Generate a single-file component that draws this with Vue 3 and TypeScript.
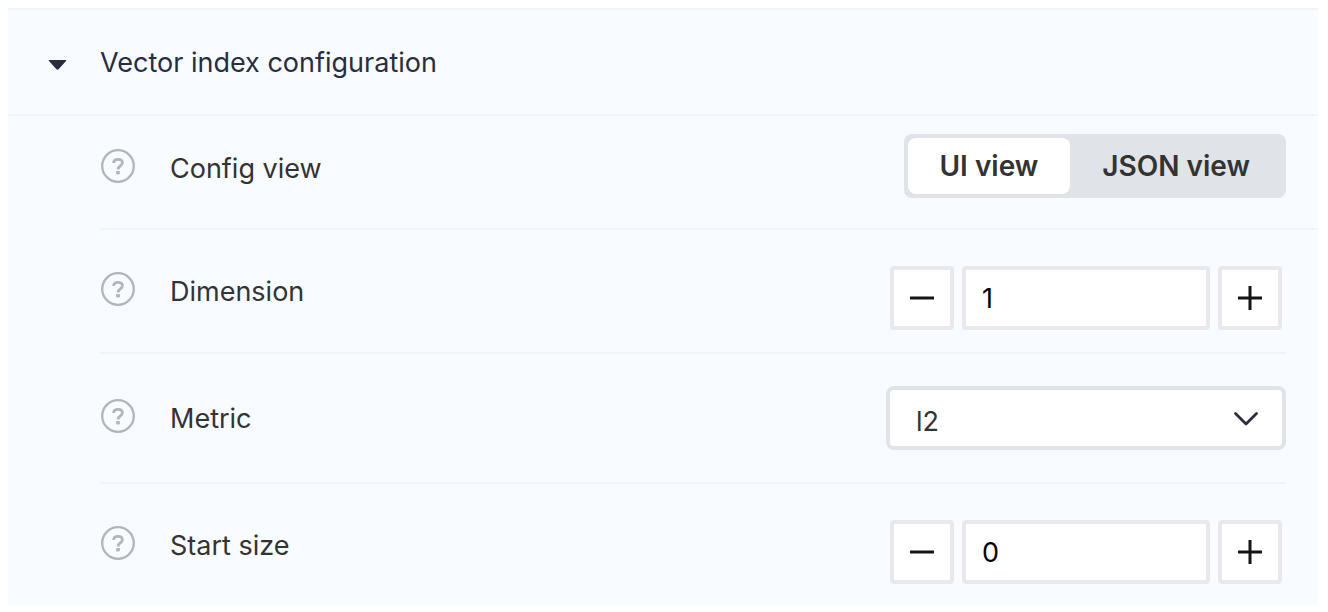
<script setup lang="ts">
import { ref } from 'vue'

type RowKind = 'toggle' | 'number' | 'select'

interface ConfigRow {
  id: string
  label: string
  kind: RowKind
}

const rows: ConfigRow[] = [
  { id: 'view', label: 'Config view', kind: 'toggle' },
  { id: 'dimension', label: 'Dimension', kind: 'number' },
  { id: 'metric', label: 'Metric', kind: 'select' },
  { id: 'start-size', label: 'Start size', kind: 'number' },
]

const views = ['UI view', 'JSON view']
const metrics = ['l2', 'ip', 'cosine']

const open = ref(true)
const activeView = ref('UI view')
const metric = ref('l2')
const values = ref<Record<string, number>>({ dimension: 1, 'start-size': 0 })

function step(id: string, delta: number) {
  values.value[id] = Math.max(0, Number(values.value[id]) + delta)
}
</script>

<template>
  <main class="page">
    <section class="panel">
      <h2 class="heading">
        <button class="header" type="button" :aria-expanded="open" @click="open = !open">
          <svg class="caret" width="20" height="12" viewBox="0 0 20 12" aria-hidden="true">
            <path d="M1.3 1H17.7Q18.9 1 18 2L10.8 10Q9.5 11.5 8.2 10L1 2Q.1 1 1.3 1Z" fill="#292d3d" />
          </svg>
          <span>Vector index configuration</span>
        </button>
      </h2>

      <div v-if="open" class="rows">
        <div v-for="row in rows" :key="row.id" class="row" :class="row.kind">
          <div class="lead">
            <svg class="help" width="36" height="36" viewBox="0 0 36 36" fill="none" aria-hidden="true">
              <circle cx="18" cy="18" r="15.8" stroke="#b2b5ba" stroke-width="2.3" />
              <path
                d="M13.6 15C13.7 12.7 15.4 11.3 18 11.3C20.7 11.3 22.4 12.7 22.4 14.7C22.4 16.2 21.6 17.1 20.2 18C18.7 18.9 18.1 19.7 18.1 21.6"
                stroke="#b2b5ba"
                stroke-width="2.8"
              />
              <rect x="16.1" y="23" width="3.8" height="3.4" rx=".8" fill="#b2b5ba" />
            </svg>
            <span v-if="row.kind === 'toggle'" :id="row.id" class="label">{{ row.label }}</span>
            <label v-else :for="row.id" class="label">{{ row.label }}</label>
          </div>

          <div v-if="row.kind === 'toggle'" class="segments" role="group" :aria-labelledby="row.id">
            <button
              v-for="view in views"
              :key="view"
              type="button"
              class="segment"
              :class="{ active: view === activeView }"
              :aria-pressed="view === activeView"
              @click="activeView = view"
            >
              {{ view }}
            </button>
          </div>

          <div v-else-if="row.kind === 'number'" class="stepper">
            <button type="button" class="step" :aria-label="'Decrease ' + row.label" @click="step(row.id, -1)">
              <svg width="24" height="24" viewBox="0 0 24 24" aria-hidden="true">
                <path d="M0 12H24" stroke="#151515" stroke-width="3" />
              </svg>
            </button>
            <input :id="row.id" v-model="values[row.id]" class="field" type="text" inputmode="numeric" />
            <button type="button" class="step" :aria-label="'Increase ' + row.label" @click="step(row.id, 1)">
              <svg width="24" height="24" viewBox="0 0 24 24" aria-hidden="true">
                <path d="M0 12H24M12 0V24" stroke="#151515" stroke-width="3" />
              </svg>
            </button>
          </div>

          <div v-else class="picker">
            <select :id="row.id" v-model="metric" class="dropdown">
              <option v-for="m in metrics" :key="m" :value="m">{{ m }}</option>
            </select>
            <svg class="chevron" width="26" height="16" viewBox="0 0 26 16" fill="none" aria-hidden="true">
              <path d="M2.5 2.5L13 13L23.5 2.5" stroke="#292d3d" stroke-width="2.8" stroke-linecap="round" stroke-linejoin="round" />
            </svg>
          </div>
        </div>
      </div>
    </section>
  </main>
</template>

<style>
body {
  background: #fff;
}
</style>

<style scoped>
.page,
.page * {
  box-sizing: border-box;
}

.page {
  padding: 8px 10px 8px 8px;
  font-family: Inter, "Liberation Sans", sans-serif;
  font-size: 27px;
  line-height: 36px;
  color: #333;
}

button,
input,
select {
  margin: 0;
  font: inherit;
  color: inherit;
}

button {
  cursor: pointer;
}

.panel {
  background: #f8fbff;
  border-top: 2px solid #f1f3f5;
}

.heading {
  margin: 0;
  font: inherit;
}

.header {
  display: flex;
  align-items: center;
  gap: 32px;
  width: 100%;
  padding: 35px 40px 33px;
  border: 0;
  border-bottom: 2px solid #f1f3f5;
  background: none;
  color: #292d3d;
  text-align: left;
}

.caret {
  margin-top: 4px;
}

.rows {
  padding-left: 92px;
}

.row {
  display: flex;
  align-items: flex-start;
  justify-content: space-between;
  margin-right: 32px;
  border-bottom: 2px solid #f1f3f5;
}

.row.toggle {
  margin-right: 0;
  padding: 18px 32px 30px 0;
}

.row.number {
  padding: 36px 4px 22px 0;
}

.row.select {
  padding: 32px 0;
}

.row:last-child {
  padding-bottom: 21px;
  border-bottom: 0;
}

.lead {
  display: flex;
  align-items: center;
  gap: 34px;
  height: 64px;
}

.number .lead {
  height: 46px;
}

.select .lead {
  height: 60px;
}

.label {
  padding-top: 6px;
}

.segments {
  display: flex;
  height: 64px;
  padding: 4px;
  border-radius: 8px;
  background: #e0e3e8;
}

.segment {
  padding: 0 32px;
  border: 0;
  border-radius: 8px;
  background: none;
  font-size: 28px;
  font-weight: 600;
}

.segment.active {
  background: #fff;
}

.stepper {
  display: flex;
  gap: 8px;
}

.step,
.field {
  height: 64px;
  border: 4px solid #e9e8ed;
  border-radius: 4px;
  background: #fff;
}

.step {
  display: flex;
  align-items: center;
  justify-content: center;
  width: 64px;
  padding: 0;
}

.field {
  width: 248px;
  padding: 0 16px;
  color: #000;
}

.picker {
  position: relative;
  width: 400px;
}

.dropdown {
  display: block;
  width: 100%;
  height: 64px;
  padding: 8px 60px 0 26px;
  border: 4px solid #e0e4e9;
  border-radius: 8px;
  background: #fff;
  appearance: none;
}

.chevron {
  position: absolute;
  top: 25px;
  right: 27px;
  pointer-events: none;
}
</style>
